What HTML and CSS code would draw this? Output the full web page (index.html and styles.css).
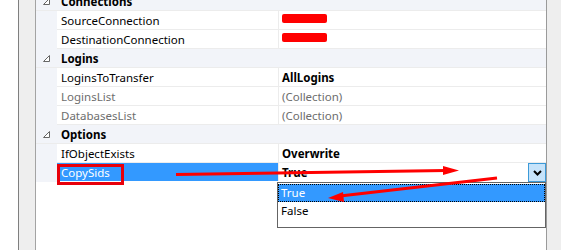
FILE: index.html
```html
<!DOCTYPE html>
<html lang="en">
<head>
    <meta charset="UTF-8">
    <title>Properties</title>
    <link rel="stylesheet" href="styles.css">
</head>
<body>
    <div class="window">
        <div class="gutter"></div>
        <div class="grid">
            <div class="cat">
                <span class="toggle"><svg width="7" height="7" viewBox="0 0 7 7"><polygon points="6.5,0.5 6.5,6.5 0.5,6.5" /></svg></span>
                <span class="cat-name">Connections</span>
            </div>
            <div class="row">
                <span class="margin"></span>
                <span class="name">SourceConnection</span>
                <span class="value"><span class="redact"></span></span>
            </div>
            <div class="row">
                <span class="margin"></span>
                <span class="name">DestinationConnection</span>
                <span class="value"><span class="redact"></span></span>
            </div>
            <div class="cat">
                <span class="toggle"><svg width="7" height="7" viewBox="0 0 7 7"><polygon points="6.5,0.5 6.5,6.5 0.5,6.5" /></svg></span>
                <span class="cat-name">Logins</span>
            </div>
            <div class="row">
                <span class="margin"></span>
                <span class="name">LoginsToTransfer</span>
                <span class="value bold">AllLogins</span>
            </div>
            <div class="row readonly">
                <span class="margin"></span>
                <span class="name">LoginsList</span>
                <span class="value">(Collection)</span>
            </div>
            <div class="row readonly">
                <span class="margin"></span>
                <span class="name">DatabasesList</span>
                <span class="value">(Collection)</span>
            </div>
            <div class="cat">
                <span class="toggle"><svg width="7" height="7" viewBox="0 0 7 7"><polygon points="6.5,0.5 6.5,6.5 0.5,6.5" /></svg></span>
                <span class="cat-name">Options</span>
            </div>
            <div class="row">
                <span class="margin"></span>
                <span class="name">IfObjectExists</span>
                <span class="value bold">Overwrite</span>
            </div>
            <div class="row selected">
                <span class="margin"></span>
                <span class="name">CopySids</span>
                <span class="value bold">
                    True
                    <span class="drop-btn"><svg width="9" height="6" viewBox="0 0 9 6"><path d="M1 1 L4.5 4.5 L8 1" /></svg></span>
                </span>
            </div>
        </div>
        <div class="scroll"></div>

        <div class="dropdown">
            <div class="option active">True</div>
            <div class="option">False</div>
        </div>

        <svg class="marks" width="561" height="250" viewBox="0 0 561 250">
            <rect x="58.5" y="165.5" width="64" height="18" />
            <line x1="176" y1="174.5" x2="446" y2="170.5" />
            <polygon points="443,166 459,170.5 443,175" />
            <line x1="497" y1="178" x2="340" y2="196" />
            <polygon points="343,192 328,198 344,202" />
        </svg>
    </div>
</body>
</html>
```

FILE: styles.css
```css
html, body {
    margin: 0;
    padding: 0;
    background: #fff;
    overflow: hidden;
}
.window {
    position: relative;
    display: flex;
    width: 561px;
    height: 250px;
    padding-left: 18px;
    box-sizing: border-box;
    font-family: "Noto Sans", "Open Sans", sans-serif;
    font-size: 11.5px;
    color: #000;
}
.gutter {
    width: 16px;
    background: #eeeeee;
    border-left: 1px solid #7f7f7f;
    border-right: 1px solid #a3a3a3;
}
.grid {
    width: 510px;
    margin-top: -8px;
}
.scroll {
    flex: 1;
    background: #eeeeee;
    border-left: 1px solid #9a9a9a;
}
.cat, .row {
    display: flex;
    height: 18px;
    line-height: 20px;
    border-bottom: 1px solid #ececec;
}
.cat {
    background: #f2f4f9;
}
.toggle {
    width: 25px;
    height: 18px;
    display: flex;
    align-items: center;
    padding-left: 7px;
    box-sizing: border-box;
}
.toggle svg polygon {
    fill: #fff;
    stroke: #666;
    stroke-width: 1;
}
.cat-name {
    font-weight: bold;
}
.margin {
    width: 21px;
    background: #f2f4f9;
    margin-bottom: -1px;
}
.name {
    width: 221px;
    padding-left: 4px;
    box-sizing: border-box;
    white-space: nowrap;
}
.value {
    flex: 1;
    position: relative;
    border-left: 1px solid #ececec;
    padding-left: 3px;
    white-space: nowrap;
}
.bold {
    font-weight: bold;
}
.readonly .name, .readonly .value {
    color: #6d6d6d;
}
.redact {
    display: inline-block;
    width: 45px;
    height: 9px;
    margin-top: 3px;
    vertical-align: top;
    background: #ff0000;
    border-radius: 2px;
}
.selected {
    border-bottom-color: #fff;
}
.selected .name {
    background: #3399ff;
    color: #fff;
}
.drop-btn {
    position: absolute;
    right: 0;
    top: 0;
    width: 16px;
    height: 17px;
    background: #c6e3fa;
    border: 1px solid #3c9ad8;
    display: flex;
    align-items: center;
    justify-content: center;
}
.drop-btn path {
    fill: none;
    stroke: #000;
    stroke-width: 2;
}
.dropdown {
    position: absolute;
    left: 277px;
    top: 182px;
    width: 267px;
    height: 43px;
    border: 1px solid #646464;
    background: #fff;
    padding-top: 1px;
    box-sizing: content-box;
}
.option {
    height: 18px;
    line-height: 18px;
    padding-left: 3px;
}
.option.active {
    background: #3399ff;
    color: #fff;
    outline: 1px dotted #000;
    outline-offset: -1px;
}
.marks {
    position: absolute;
    left: 0;
    top: 0;
    pointer-events: none;
}
.marks rect {
    fill: none;
    stroke: #e8000b;
    stroke-width: 3;
}
.marks line {
    stroke: #ff0000;
    stroke-width: 3;
}
.marks polygon {
    fill: #ff0000;
}
```
